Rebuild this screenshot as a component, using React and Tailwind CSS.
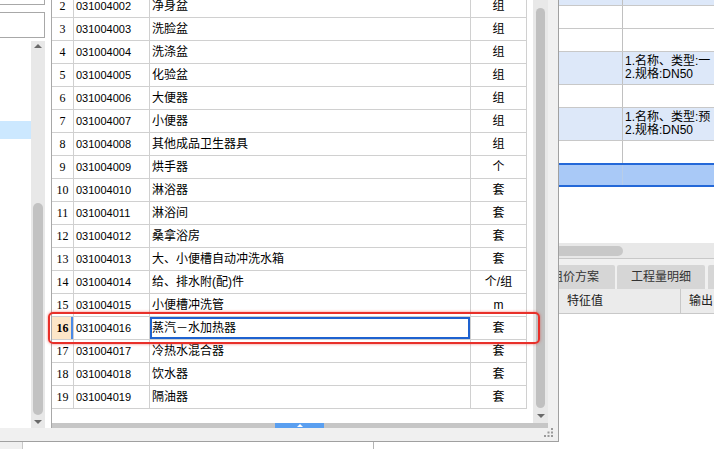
import React from "react";

const rows = [
  ["2", "031004002", "净身盆", "组"],
  ["3", "031004003", "洗脸盆", "组"],
  ["4", "031004004", "洗涤盆", "组"],
  ["5", "031004005", "化验盆", "组"],
  ["6", "031004006", "大便器", "组"],
  ["7", "031004007", "小便器", "组"],
  ["8", "031004008", "其他成品卫生器具", "组"],
  ["9", "031004009", "烘手器", "个"],
  ["10", "031004010", "淋浴器", "套"],
  ["11", "031004011", "淋浴间", "套"],
  ["12", "031004012", "桑拿浴房", "套"],
  ["13", "031004013", "大、小便槽自动冲洗水箱", "套"],
  ["14", "031004014", "给、排水附(配)件", "个/组"],
  ["15", "031004015", "小便槽冲洗管", "m"],
  ["16", "031004016", "蒸汽－水加热器", "套"],
  ["17", "031004017", "冷热水混合器", "套"],
  ["18", "031004018", "饮水器", "套"],
  ["19", "031004019", "隔油器", "套"],
];

const specRows = [
  { h: "h-[33px]", blue: true, lines: ["1.名称、类型:一", "2.规格:DN50"] },
  { h: "h-[23px]" },
  { h: "h-[23px]" },
  { h: "h-[33px]", blue: true, lines: ["1.名称、类型:一", "2.规格:DN50"] },
  { h: "h-[23px]" },
  { h: "h-[33px]", blue: true, lines: ["1.名称、类型:预", "2.规格:DN50"] },
];

function Tri({ up, color = "#6a6a6a", w = 8, h = 4 }) {
  return (
    <svg width={w} height={h} viewBox="0 0 8 4" className="block shrink-0">
      {up ? <path d="M0 4 L4 0 L8 4 Z" fill={color} /> : <path d="M0 0 L8 0 L4 4 Z" fill={color} />}
    </svg>
  );
}

function TreePanel() {
  return (
    <div className="flex w-[45px] flex-col bg-white">
      <div className="h-[5px] shrink-0 border-b border-r border-[#a8a8a8]" />
      <div className="h-[7px] shrink-0" />
      <div className="h-[26px] shrink-0 border-y border-r border-[#a8a8a8]" />
      <div className="h-[3px] shrink-0" />
      <div className="flex min-h-0 flex-1">
        <div className="w-[31px] pt-[80px]">
          <div className="h-[18px] bg-[#cce8ff]" />
        </div>
        <div className="flex w-[14px] flex-col items-center bg-[#e8e8e8] pt-[3px]">
          <Tri up />
          <div className="mt-[155px] h-[212px] w-[10px] rounded-full bg-[#c2c2c2]" />
          <div className="mt-[5px]">
            <Tri />
          </div>
        </div>
      </div>
    </div>
  );
}

function TableView() {
  return (
    <div className="flex w-[497px] flex-col border-l border-[#a8a8a8] bg-white">
      <div className="flex h-[423px]">
        <div className="w-[481px] overflow-hidden">
          <div className="-mt-[5px] w-[475px]">
            {rows.map(([no, code, name, unit]) => {
              const sel = no === "16";
              return (
                <div
                  key={no}
                  className="grid h-[23px] grid-cols-[22px_76px_321px_56px] border-b border-[#d0d0d0]"
                >
                  <div
                    className={
                      sel
                        ? "flex items-center justify-center border-r border-[#d0d0d0] bg-[#fde6c8] font-['Liberation_Serif',serif] text-[12px] font-bold shadow-[inset_-2px_0_0_#4a8ae8]"
                        : "flex items-center justify-center border-r border-[#d0d0d0] font-['Liberation_Serif',serif] text-[12px]"
                    }
                  >
                    {no}
                  </div>
                  <div className="flex items-center border-r border-[#d0d0d0] pl-[2px] text-[11px]">
                    {code}
                  </div>
                  <div
                    className={
                      sel
                        ? "flex items-center border-r border-[#d0d0d0] pl-[2px] shadow-[inset_0_0_0_2px_#1e62d0]"
                        : "flex items-center border-r border-[#d0d0d0] pl-[2px]"
                    }
                  >
                    {name}
                  </div>
                  <div className="flex items-center justify-center border-r border-[#d0d0d0]">
                    {unit}
                  </div>
                </div>
              );
            })}
          </div>
        </div>
        <div className="flex w-[15px] flex-col items-center bg-[#e8e8e8] px-[3px]">
          <div className="mt-[8px] h-[400px] w-[9px] rounded-full bg-[#c0c0c0]" />
          <div className="mt-[6px]">
            <Tri />
          </div>
        </div>
      </div>
      <div className="flex h-[5px] bg-[#c6c6c6]">
        <div className="ml-[223px] flex h-full w-[49px] items-center justify-center bg-[#5a9ff0]">
          <svg width="6" height="3" viewBox="0 0 6 3" className="block">
            <path d="M0 3 L3 0 L6 3 Z" fill="#ffffff" />
          </svg>
        </div>
      </div>
    </div>
  );
}

function RightPanel() {
  return (
    <div className="flex w-[155px] flex-col overflow-hidden bg-white">
      <div className="h-[187px] shrink-0 overflow-hidden">
        <div className="-mt-[27px]">
          {specRows.map((r, i) => (
            <div
              key={i}
              className={`flex ${r.h} border-b border-[#c8c8c8] ${r.blue ? "bg-[#dde8f9]" : ""}`}
            >
              <div className="w-[64px] shrink-0 border-r border-[#c0c0c0]" />
              <div className="whitespace-nowrap pl-[2px] pt-[3px] leading-[13px]">
                {r.lines && r.lines.map((l) => <div key={l}>{l}</div>)}
              </div>
            </div>
          ))}
          <div className="flex h-[22px]">
            <div className="w-[64px] shrink-0 border-r border-[#c0c0c0]" />
          </div>
          <div className="flex h-[24px] border-y-2 border-[#2468d8] bg-[#a9c9f7]">
            <div className="w-[64px] shrink-0 border-r border-[#b8cde8]" />
          </div>
        </div>
      </div>
      <div className="h-[56px] shrink-0" />
      <div className="h-[16px] shrink-0 border-b border-[#c8c8c8] bg-[#e8e8e8] pt-[3px]">
        <div className="h-[10px] w-[64px] rounded-r-full bg-[#c8c8c8]" />
      </div>
      <div className="h-[6px] shrink-0 bg-[#f0f0f0]" />
      <div className="flex h-[24px] shrink-0 bg-[#f0f0f0]">
        <div className="-ml-[24px] flex">
          <div className="flex w-[80px] items-center justify-center rounded-t-[2px] bg-[#d6d6d6] text-[#333]">
            组价方案
          </div>
          <div className="ml-[2px] flex w-[88px] items-center justify-center rounded-t-[2px] bg-[#d6d6d6] text-[#333]">
            工程量明细
          </div>
          <div className="ml-[3px] w-[60px] rounded-t-[2px] bg-[#d6d6d6]" />
        </div>
      </div>
      <div className="flex h-[25px] shrink-0 border-b border-[#c8c8c8] bg-[#ebebeb] text-[#222]">
        <div className="flex w-[122px] shrink-0 items-center border-r border-[#c8c8c8] pl-[8px]">
          特征值
        </div>
        <div className="flex items-center whitespace-nowrap pl-[8px]">输出</div>
      </div>
      <div className="flex-1" />
    </div>
  );
}

export default function App() {
  return (
    <div className="relative flex h-[449px] w-[714px] overflow-hidden bg-white font-['Liberation_Sans','Noto_Sans_CJK_SC',sans-serif] text-[12px] text-black">
      <div className="flex w-[559px] shrink-0 flex-col">
        <div className="flex h-[442px] shrink-0 flex-col border-b border-r border-[#a0a0a0] bg-[#f0f0f0]">
          <div className="flex h-[428px] shrink-0">
            <TreePanel />
            <div className="w-[6px] bg-white" />
            <TableView />
            <div className="w-[10px]" />
          </div>
          <div className="flex flex-1 items-end justify-end pb-[4px] pr-[5px]">
            <svg width="9" height="9" viewBox="0 0 9 9" className="block">
              <rect x="7" y="0" width="2" height="2" fill="#9a9a9a" />
              <rect x="3.5" y="3.5" width="2" height="2" fill="#9a9a9a" />
              <rect x="7" y="3.5" width="2" height="2" fill="#9a9a9a" />
              <rect x="0" y="7" width="2" height="2" fill="#9a9a9a" />
              <rect x="3.5" y="7" width="2" height="2" fill="#9a9a9a" />
              <rect x="7" y="7" width="2" height="2" fill="#9a9a9a" />
            </svg>
          </div>
        </div>
        <div className="flex flex-1">
          <div className="w-[23px] border-r border-[#c8c8c8] bg-[#f0f0f0]" />
          <div className="w-[351px] border-r border-[#b4b4b4]" />
        </div>
      </div>
      <RightPanel />
      <div className="pointer-events-none absolute left-[48px] top-[312px] h-[32px] w-[492px] rounded-[5px] border-[2.5px] border-[#e8302a] shadow-[0_0_3px_rgba(232,48,42,0.6)]" />
    </div>
  );
}
